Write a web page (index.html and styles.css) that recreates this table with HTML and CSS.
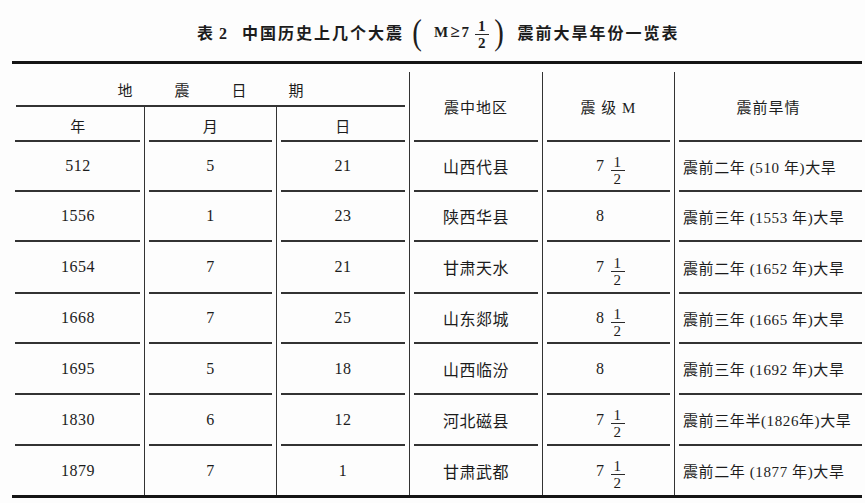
FILE: index.html
```html
<!DOCTYPE html>
<html lang="zh">
<head>
<meta charset="utf-8">
<title>表2 中国历史上几个大震震前大旱年份一览表</title>
<link rel="stylesheet" href="styles.css">
</head>
<body>
<div class="page">
  <div class="title">
    <span class="t-label">表 2</span>
    <span class="t-main">中国历史上几个大震</span>
    <span class="paren">(</span>
    <span class="t-m">M<span class="ge">≥</span>7</span>
    <span class="frac t-frac"><span class="num">1</span><span class="den">2</span></span>
    <span class="paren">)</span>
    <span class="t-main t-main2">震前大旱年份一览表</span>
  </div>
  <div class="rule-thick"></div>
  <div class="grid">
    <div class="cell head span3 vline"><span class="txt spaced">地震日期</span></div>
    <div class="cell head tall vline"><span class="txt">震中地区</span></div>
    <div class="cell head tall vline"><span class="txt">震 级 M</span></div>
    <div class="cell head tall last-col"><span class="txt">震前旱情</span></div>
    <div class="cell sub vline first-col"><span class="txt">年</span></div>
    <div class="cell sub vline"><span class="txt">月</span></div>
    <div class="cell sub vline"><span class="txt">日</span></div>

    <div class="cell vline first-col"><span class="txt">512</span></div>
    <div class="cell vline"><span class="txt">5</span></div>
    <div class="cell vline"><span class="txt">21</span></div>
    <div class="cell vline"><span class="txt">山西代县</span></div>
    <div class="cell vline mag"><span class="txt">7<span class="frac"><span class="num">1</span><span class="den">2</span></span></span></div>
    <div class="cell note last-col"><span class="txt">震前二年 (510 年)大旱</span></div>

    <div class="cell vline first-col"><span class="txt">1556</span></div>
    <div class="cell vline"><span class="txt">1</span></div>
    <div class="cell vline"><span class="txt">23</span></div>
    <div class="cell vline"><span class="txt">陕西华县</span></div>
    <div class="cell vline mag"><span class="txt">8</span></div>
    <div class="cell note last-col"><span class="txt">震前三年 (1553 年)大旱</span></div>

    <div class="cell vline first-col"><span class="txt">1654</span></div>
    <div class="cell vline"><span class="txt">7</span></div>
    <div class="cell vline"><span class="txt">21</span></div>
    <div class="cell vline"><span class="txt">甘肃天水</span></div>
    <div class="cell vline mag"><span class="txt">7<span class="frac"><span class="num">1</span><span class="den">2</span></span></span></div>
    <div class="cell note last-col"><span class="txt">震前二年 (1652 年)大旱</span></div>

    <div class="cell vline first-col"><span class="txt">1668</span></div>
    <div class="cell vline"><span class="txt">7</span></div>
    <div class="cell vline"><span class="txt">25</span></div>
    <div class="cell vline"><span class="txt">山东郯城</span></div>
    <div class="cell vline mag"><span class="txt">8<span class="frac"><span class="num">1</span><span class="den">2</span></span></span></div>
    <div class="cell note last-col"><span class="txt">震前三年 (1665 年)大旱</span></div>

    <div class="cell vline first-col"><span class="txt">1695</span></div>
    <div class="cell vline"><span class="txt">5</span></div>
    <div class="cell vline"><span class="txt">18</span></div>
    <div class="cell vline"><span class="txt">山西临汾</span></div>
    <div class="cell vline mag"><span class="txt">8</span></div>
    <div class="cell note last-col"><span class="txt">震前三年 (1692 年)大旱</span></div>

    <div class="cell vline first-col"><span class="txt">1830</span></div>
    <div class="cell vline"><span class="txt">6</span></div>
    <div class="cell vline"><span class="txt">12</span></div>
    <div class="cell vline"><span class="txt">河北磁县</span></div>
    <div class="cell vline mag"><span class="txt">7<span class="frac"><span class="num">1</span><span class="den">2</span></span></span></div>
    <div class="cell note last-col"><span class="txt">震前三年半(1826年)大旱</span></div>

    <div class="cell vline first-col end"><span class="txt">1879</span></div>
    <div class="cell vline end"><span class="txt">7</span></div>
    <div class="cell vline end"><span class="txt">1</span></div>
    <div class="cell vline end"><span class="txt">甘肃武都</span></div>
    <div class="cell vline mag end"><span class="txt">7<span class="frac"><span class="num">1</span><span class="den">2</span></span></span></div>
    <div class="cell note last-col end"><span class="txt">震前二年 (1877 年)大旱</span></div>
  </div>
  <div class="rule-thick"></div>
</div>
</body>
</html>
```

FILE: styles.css
```css
html, body {
  margin: 0;
  padding: 0;
  background: #fdfdfd;
}

body {
  font-family: "Liberation Serif", "Noto Sans CJK SC", serif;
  color: #1c1c1c;
  width: 865px;
  height: 503px;
  overflow: hidden;
}

.page {
  width: 850px;
  margin-left: 12px;
}

/* ---------- title ---------- */
.title {
  height: 58px;
  padding-top: 3px;
  display: flex;
  align-items: center;
  padding-left: 185px;
}

.t-label {
  font-size: 16px;
  font-weight: 700;
  letter-spacing: 1px;
  margin-right: 14px;
}

.t-main {
  font-size: 16px;
  font-weight: 700;
  letter-spacing: 2px;
}

.t-main2 {
  margin-left: 10px;
}

.paren {
  font-size: 36px;
  line-height: 40px;
  font-weight: 400;
  margin: 0 3px 0 7px;
  transform: scaleX(0.8);
  color: #1e1e1e;
}

.t-m {
  font-size: 15px;
  font-weight: 700;
  margin-left: 8px;
  display: flex;
  align-items: center;
}

.ge {
  font-size: 17px;
  margin: 0 2px;
}

.t-frac {
  margin-top: 4px;
  margin-left: 6px;
  margin-right: -3px;
  font-weight: 700;
  font-size: 16px;
  line-height: 15px;
}

/* ---------- fractions ---------- */
.frac {
  display: inline-flex;
  flex-direction: column;
  align-items: center;
  font-size: 15px;
  line-height: 14px;
}

.frac .num {
  padding: 0 3px 1px;
  border-bottom: 1.5px solid #2a2a2a;
}

.frac .den {
  padding-top: 1px;
}

/* ---------- table ---------- */
.rule-thick {
  height: 3px;
  background: #151515;
}

.grid {
  display: grid;
  grid-template-columns: 133px 132px 133px 133px 132px 187px;
  grid-template-rows: 43px 35px 50px 50px 52px 50px 51px 51px 49px;
}

.cell {
  display: flex;
  flex-direction: column;
  min-width: 0;
  font-size: 16px;
}

.cell::after {
  content: "";
  display: block;
  height: 2px;
  background: #333;
  margin: 0 4px 0 4px;
}

.cell.first-col::after {
  margin-left: 3px;
}

.cell.last-col::after {
  margin-right: 0;
}

.cell.end::after {
  display: none;
}

.vline {
  border-right: 1.5px solid #333;
}

.txt {
  flex: 1;
  display: flex;
  align-items: center;
  justify-content: center;
  white-space: nowrap;
  letter-spacing: 0.5px;
}

.head {
  margin-top: 8px;
  font-size: 15px;
}

.head .txt {
  letter-spacing: 1px;
}

.span3 {
  grid-column: span 3;
}

.head .spaced {
  letter-spacing: 42px;
  padding-left: 42px;
  padding-top: 2px;
}

.tall {
  grid-row: span 2;
}

.sub {
  font-size: 15px;
}

.sub .txt {
  padding-top: 4px;
}

.mag .txt {
  justify-content: flex-start;
  padding-left: 53px;
}

.mag .frac {
  margin-left: 6px;
  margin-top: 8px;
}

.note .txt {
  justify-content: flex-start;
  padding-left: 8px;
  font-size: 15px;
  letter-spacing: 0.6px;
}
```
